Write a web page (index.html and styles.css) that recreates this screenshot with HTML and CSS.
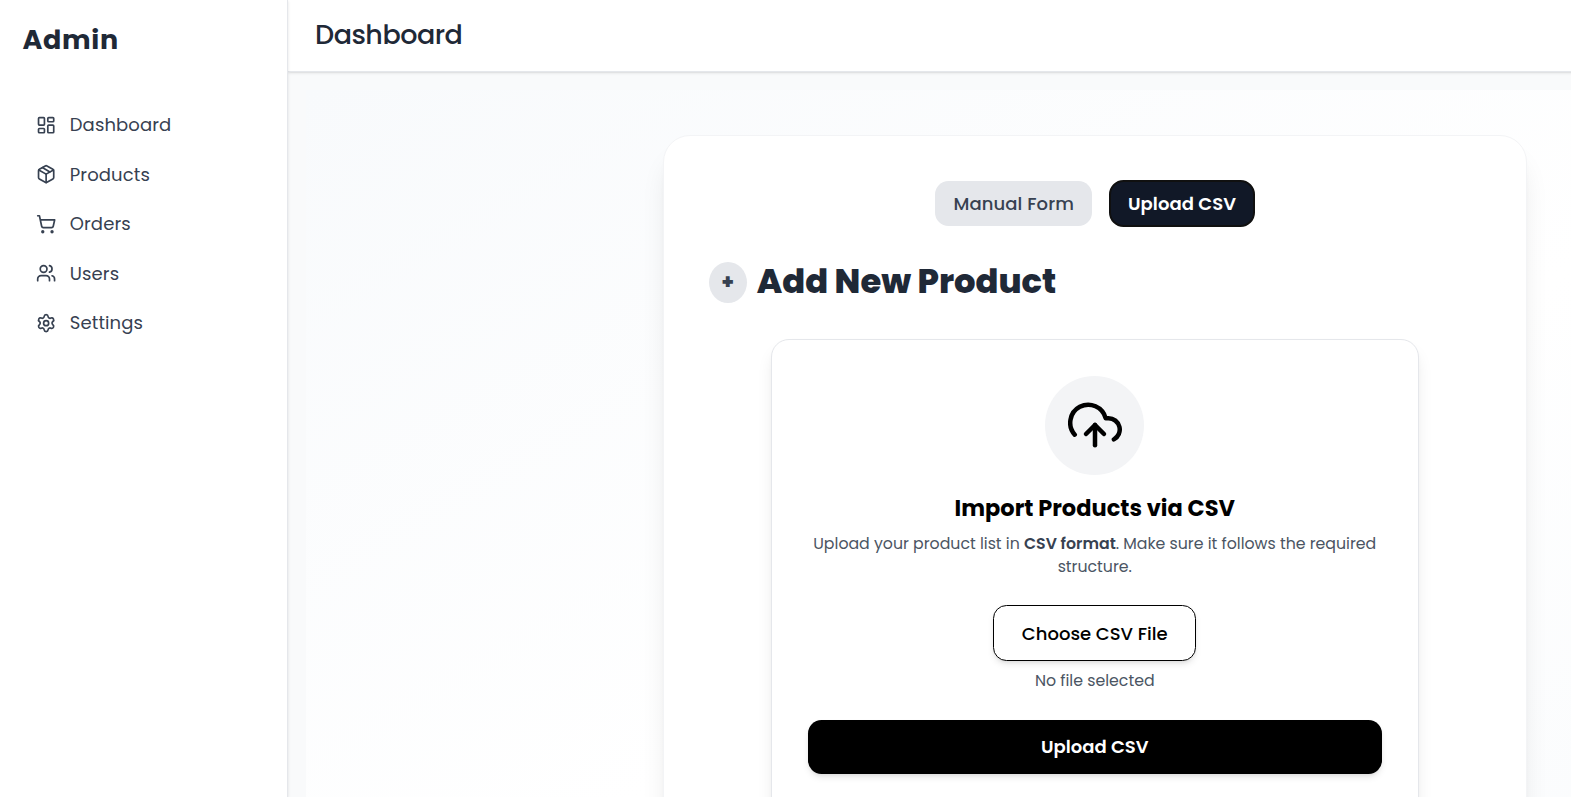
FILE: index.html
```html
<!DOCTYPE html>
<html lang="en">
<head>
<meta charset="utf-8">
<title>Admin Dashboard</title>
<link rel="stylesheet" href="styles.css">
</head>
<body>
<div class="app">
  <aside class="sidebar">
    <div class="brand">Admin</div>
    <nav class="nav">
      <a class="nav-item"><svg viewBox="0 0 24 24"><rect width="7" height="9" x="3" y="3" rx="1"/><rect width="7" height="5" x="14" y="3" rx="1"/><rect width="7" height="9" x="14" y="12" rx="1"/><rect width="7" height="5" x="3" y="16" rx="1"/></svg><span>Dashboard</span></a>
      <a class="nav-item"><svg viewBox="0 0 24 24"><path d="M11 21.73a2 2 0 0 0 2 0l7-4A2 2 0 0 0 21 16V8a2 2 0 0 0-1-1.73l-7-4a2 2 0 0 0-2 0l-7 4A2 2 0 0 0 3 8v8a2 2 0 0 0 1 1.73z"/><path d="M12 22V12"/><path d="M3.29 7 12 12l8.71-5"/><path d="m7.5 4.27 9 5.15"/></svg><span>Products</span></a>
      <a class="nav-item"><svg viewBox="0 0 24 24"><circle cx="8" cy="21" r="1"/><circle cx="19" cy="21" r="1"/><path d="M2.05 2.05h2l2.66 12.42a2 2 0 0 0 2 1.58h9.78a2 2 0 0 0 1.95-1.57l1.65-7.43H5.12"/></svg><span>Orders</span></a>
      <a class="nav-item"><svg viewBox="0 0 24 24"><path d="M16 21v-2a4 4 0 0 0-4-4H6a4 4 0 0 0-4 4v2"/><path d="M16 3.128a4 4 0 0 1 0 7.744"/><path d="M22 21v-2a4 4 0 0 0-3-3.87"/><circle cx="9" cy="7" r="4"/></svg><span>Users</span></a>
      <a class="nav-item"><svg viewBox="0 0 24 24"><path d="M9.671 4.136a2.34 2.34 0 0 1 4.659 0 2.34 2.34 0 0 0 3.319 1.915 2.34 2.34 0 0 1 2.33 4.033 2.34 2.34 0 0 0 0 3.831 2.34 2.34 0 0 1-2.33 4.033 2.34 2.34 0 0 0-3.319 1.915 2.34 2.34 0 0 1-4.659 0 2.34 2.34 0 0 0-3.32-1.915 2.34 2.34 0 0 1-2.33-4.033 2.34 2.34 0 0 0 0-3.831A2.34 2.34 0 0 1 6.35 6.051a2.34 2.34 0 0 0 3.319-1.915"/><circle cx="12" cy="12" r="3"/></svg><span>Settings</span></a>
    </nav>
  </aside>
  <div class="content">
    <header class="topbar"><h1 class="topbar-title">Dashboard</h1></header>
    <main class="main">
      <div class="stage">
        <section class="card">
          <div class="tabs">
            <button class="tab">Manual Form</button>
            <button class="tab tab-active">Upload CSV</button>
          </div>
          <div class="heading">
            <span class="plus">+</span>
            <h2 class="heading-text">Add New Product</h2>
          </div>
          <div class="import">
            <div class="cloud"><svg viewBox="0 0 24 24"><path d="m16 16-4-4-4 4"/><path d="M12 12v9"/><path d="M20.39 18.39A5 5 0 0 0 18 9h-1.26A8 8 0 1 0 3 16.3"/></svg></div>
            <h3 class="import-title">Import Products via CSV</h3>
            <p class="import-text">Upload your product list in <strong>CSV format</strong>. Make sure it follows the required structure.</p>
            <button class="choose">Choose CSV File</button>
            <p class="file-name">No file selected</p>
            <button class="upload">Upload CSV</button>
          </div>
        </section>
      </div>
    </main>
  </div>
</div>
</body>
</html>
```
FILE: styles.css
```css
* { box-sizing: border-box; margin: 0; padding: 0; }
body {
  height: 100vh;
  overflow: hidden;
  background: #fff;
  color: #1f2937;
  font-family: Poppins, Inter, "Liberation Sans", sans-serif;
  font-size: 18px;
  line-height: 27px;
}
button { font: inherit; border: 0; }
svg { fill: none; stroke: currentColor; stroke-width: 2; stroke-linecap: round; stroke-linejoin: round; }

.app { display: flex; width: 1901.5px; height: 100vh; }
.sidebar {
  position: relative;
  z-index: 2;
  width: 288px;
  flex: none;
  background: #fff;
  border-right: 1px solid #e5e7eb;
  box-shadow: 0 1px 3px rgba(0, 0, 0, .1), 0 1px 2px -1px rgba(0, 0, 0, .1);
}
.brand { padding: 22px 22.5px 0; font-size: 27px; line-height: 36px; font-weight: 700; letter-spacing: .675px; }
.nav { display: flex; flex-direction: column; gap: 4.5px; padding: 44px 18px 0; }
.nav-item { display: flex; align-items: center; gap: 13.5px; height: 45px; padding: 0 18px; color: #374151; letter-spacing: .12px; }
.nav-item svg { width: 20.25px; height: 20.25px; flex: none; margin-top: 1px; }

.content { flex: 1; display: flex; flex-direction: column; min-width: 0; }
.topbar {
  position: relative;
  z-index: 1;
  height: 72px;
  flex: none;
  display: flex;
  align-items: center;
  padding: 0 27px 2px;
  background: #fff;
  border-bottom: 1px solid #e5e7eb;
  box-shadow: 0 1px 3px rgba(0, 0, 0, .1), 0 1px 2px -1px rgba(0, 0, 0, .1);
}
.topbar-title { font-size: 27px; line-height: 36px; font-weight: 500; letter-spacing: -.5px; }
.main { flex: 1; padding: 18px; background: #f9fafb; overflow: hidden; }
.stage { height: 900px; padding: 45px; background: linear-gradient(to bottom right, #f8fafc, #fff, #f8fafc); }
.card {
  width: 864px;
  height: 810px;
  margin: 0 auto;
  padding: 45px;
  border: 1px solid #f3f4f6;
  border-radius: 27px;
  background: #fff;
  box-shadow: 0 22px 28px -6px rgba(0, 0, 0, .1), 0 9px 11px -7px rgba(0, 0, 0, .1);
}
.tabs { display: flex; justify-content: center; gap: 18px; margin-bottom: 36px; }
.tab { height: 45px; padding: 0 18px; border-radius: 13.5px; background: #e5e7eb; color: #374151; font-weight: 500; letter-spacing: .1px; }
.tab-active { background: #111827; color: #fff; font-weight: 600; letter-spacing: .05px; outline: 2px solid #101010; outline-offset: -1px; }
.heading { display: flex; align-items: center; gap: 10px; height: 41px; margin-bottom: 36px; }
.plus { width: 38px; height: 41px; border-radius: 50%; background: #e5e7eb; color: #374151; font-size: 20.25px; font-weight: 800; text-align: center; line-height: 41px; }
.heading-text { font-size: 33.75px; line-height: 40px; font-weight: 800; padding-bottom: 2px; }
.import {
  display: flex;
  flex-direction: column;
  align-items: center;
  width: 648px;
  height: 520px;
  margin: 0 auto;
  padding: 36px;
  border: 1px solid #e5e7eb;
  border-radius: 18px;
  background: #fff;
  box-shadow: 0 11px 17px -3px rgba(0, 0, 0, .1), 0 4px 7px -4px rgba(0, 0, 0, .1);
}
.cloud { flex: none; width: 99px; height: 99px; padding: 22px 22.5px 23px; border-radius: 50%; background: #f3f4f6; color: #000; }
.cloud svg { display: block; width: 54px; height: 54px; }
.import-title { margin-top: 18px; color: #000; font-size: 22.5px; line-height: 31.5px; font-weight: 700; }
.import-text { margin-top: 7.5px; color: #4b5563; font-size: 15.75px; line-height: 23.4px; text-align: center; }
.import-text strong { color: #374151; font-weight: 600; }
.choose {
  width: 203px;
  height: 56px;
  margin-top: 25.7px;
  padding-top: 1px;
  border: 1px solid #000;
  border-radius: 13.5px;
  background: #fff;
  color: #000;
  font-weight: 500;
  box-shadow: 0 4px 7px -1px rgba(0, 0, 0, .1), 0 2px 4px -2px rgba(0, 0, 0, .1);
}
.file-name { margin-top: 8px; color: #4b5563; font-size: 15.75px; line-height: 23.4px; }
.upload {
  width: 100%;
  height: 54px;
  margin-top: 28px;
  border-radius: 13.5px;
  background: #000;
  color: #fff;
  font-weight: 600;
  box-shadow: 0 4px 7px -1px rgba(0, 0, 0, .1), 0 2px 4px -2px rgba(0, 0, 0, .1);
}
```
